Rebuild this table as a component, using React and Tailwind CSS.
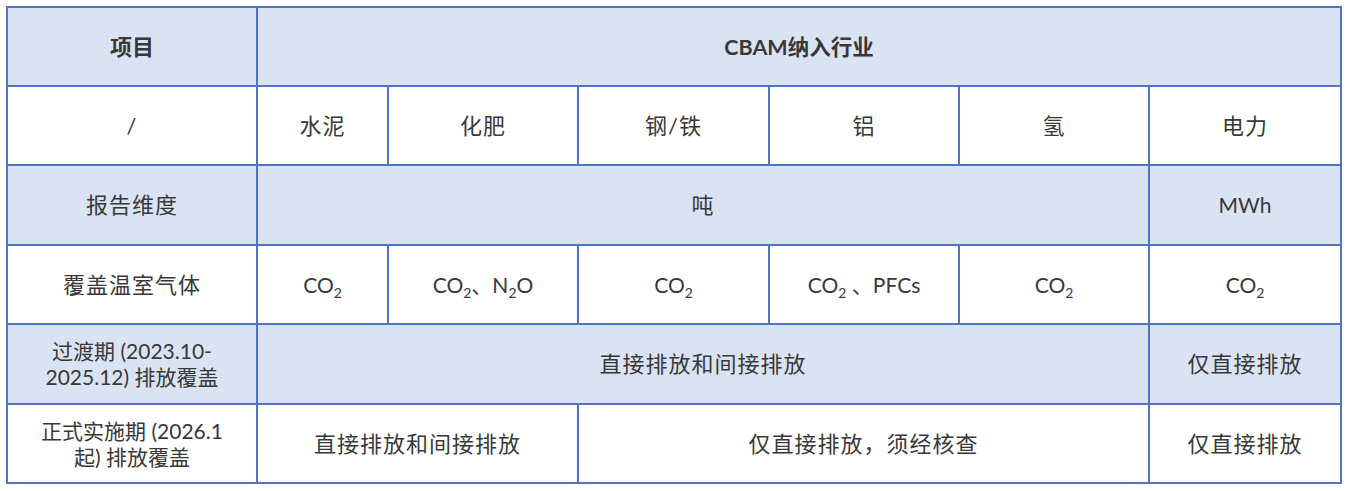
import React from "react";

const Sub = ({ children }) => (
  <span className="relative top-[5px] text-[14px] leading-none tracking-normal">{children}</span>
);

const CO2 = () => (
  <span>
    CO<Sub>2</Sub>
  </span>
);

const Cell = ({ className = "", children }) => (
  <div
    className={
      "flex items-center justify-center text-center leading-[26px] text-[#383838] " +
      (className.includes("text-[") ? "" : "text-[22px] tracking-[1px] ") +
      className
    }
  >
    {children}
  </div>
);

export default function App() {
  return (
    <div
      className="w-[1350px] h-[491px] bg-white pt-[6px] pl-[6px]"
      style={{ fontFamily: "Lato, 'Noto Sans CJK SC', sans-serif" }}
    >
      <div className="grid w-[1336px] grid-cols-[248px_129px_188px_189px_188px_188px_190px] grid-rows-[77px_77px_78px_77px_78px_77px] gap-[2px] bg-[#4f74c2] p-[2px]">
        <Cell className="bg-[#dae3f3] font-bold text-[#1f1f1f] text-[22px]">项目</Cell>
        <Cell className="col-span-6 bg-[#dae3f3] font-bold text-[#1f1f1f] text-[21.5px]">CBAM纳入行业</Cell>

        <Cell className="bg-white">/</Cell>
        <Cell className="bg-white">水泥</Cell>
        <Cell className="bg-white">化肥</Cell>
        <Cell className="bg-white">钢/铁</Cell>
        <Cell className="bg-white">铝</Cell>
        <Cell className="bg-white">氢</Cell>
        <Cell className="bg-white">电力</Cell>

        <Cell className="bg-[#dae3f3]">报告维度</Cell>
        <Cell className="col-span-5 bg-[#dae3f3]">吨</Cell>
        <Cell className="bg-[#dae3f3] text-[21px]">MWh</Cell>

        <Cell className="bg-white">覆盖温室气体</Cell>
        <Cell className="bg-white text-[21px]"><CO2 /></Cell>
        <Cell className="bg-white text-[21px]">
          <span>
            CO<Sub>2</Sub>、N<Sub>2</Sub>O
          </span>
        </Cell>
        <Cell className="bg-white text-[21px]"><CO2 /></Cell>
        <Cell className="bg-white text-[21px]">
          <span>
            CO<Sub>2</Sub> 、PFCs
          </span>
        </Cell>
        <Cell className="bg-white text-[21px]"><CO2 /></Cell>
        <Cell className="bg-white text-[21px]"><CO2 /></Cell>

        <Cell className="bg-[#dae3f3] text-[21px]">
          <span>
            过渡期 (2023.10-
            <br />
            2025.12) 排放覆盖
          </span>
        </Cell>
        <Cell className="col-span-5 bg-[#dae3f3]">直接排放和间接排放</Cell>
        <Cell className="bg-[#dae3f3]">仅直接排放</Cell>

        <Cell className="bg-white text-[21px]">
          <span>
            正式实施期 (2026.1
            <br />
            起) 排放覆盖
          </span>
        </Cell>
        <Cell className="col-span-2 bg-white">直接排放和间接排放</Cell>
        <Cell className="col-span-3 bg-white">仅直接排放，须经核查</Cell>
        <Cell className="bg-white">仅直接排放</Cell>
      </div>
    </div>
  );
}
